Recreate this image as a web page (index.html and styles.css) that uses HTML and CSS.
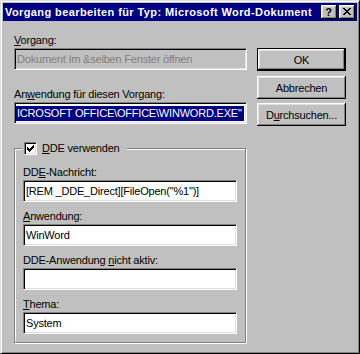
FILE: index.html
```html
<!DOCTYPE html>
<html lang="de">
<head>
<meta charset="utf-8">
<title>Vorgang bearbeiten</title>
<link rel="stylesheet" href="styles.css">
</head>
<body>
<div class="window">
  <div class="titlebar">
    <span class="title">Vorgang bearbeiten für Typ: Microsoft Word-Dokument</span>
    <div class="tbtns">
      <button class="tbtn help">?</button>
      <button class="tbtn close"><svg width="8" height="7" viewBox="0 0 8 7"><path d="M0 0h2v1h-2zM6 0h2v1h-2zM1 1h2v1h-2zM5 1h2v1h-2zM2 2h4v1h-4zM3 3h2v1h-2zM2 4h4v1h-4zM1 5h2v1h-2zM5 5h2v1h-2zM0 6h2v1h-2zM6 6h2v1h-2z" fill="#000"/></svg></button>
    </div>
  </div>
  <div class="content">
    <div class="left">
      <div class="lbl"><u>V</u>organg:</div>
      <div class="edit disabled"><span class="txt">Dokument Im &amp;selben Fenster öffnen</span></div>
      <div class="lbl lbl-gap">An<u>w</u>endung für diesen Vorgang:</div>
      <div class="edit"><span class="sel">ICROSOFT OFFICE\OFFICE\WINWORD.EXE"</span></div>
      <div class="group">
        <div class="legend">
          <span class="check"><svg width="7" height="7" viewBox="0 0 7 7"><path d="M0 2h1v3h-1zM1 3h1v3h-1zM2 4h1v3h-1zM3 3h1v3h-1zM4 2h1v3h-1zM5 1h1v3h-1zM6 0h1v3h-1z" fill="#000"/></svg></span>
          <span class="legend-text"><u>D</u>DE verwenden</span>
        </div>
        <div class="row first">
          <div class="lbl">DD<u>E</u>-Nachricht:</div>
          <div class="edit"><span class="txt">[REM _DDE_Direct][FileOpen("%1")]</span></div>
        </div>
        <div class="row">
          <div class="lbl"><u>A</u>nwendung:</div>
          <div class="edit"><span class="txt">WinWord</span></div>
        </div>
        <div class="row">
          <div class="lbl">DDE-Anwendung <u>n</u>icht aktiv:</div>
          <div class="edit"><span class="txt"></span></div>
        </div>
        <div class="row">
          <div class="lbl"><u>T</u>hema:</div>
          <div class="edit"><span class="txt">System</span></div>
        </div>
      </div>
    </div>
    <div class="right">
      <button class="btn default">OK</button>
      <button class="btn b2">Abbrechen</button>
      <button class="btn">D<u>u</u>rchsuchen...</button>
    </div>
  </div>
</div>
</body>
</html>
```
FILE: styles.css
```css
html, body {
  margin: 0;
  padding: 0;
}
body {
  width: 360px;
  height: 354px;
  overflow: hidden;
  background: #c0c0c0;
  font-family: "Liberation Sans", Arial, sans-serif;
  font-size: 11px;
  letter-spacing: -0.2px;
  color: #000;
}
u {
  text-decoration: underline;
  text-underline-offset: 1px;
}
.window {
  box-sizing: border-box;
  width: 360px;
  height: 354px;
  border: 1px solid;
  border-color: #dfdfdf #000 #000 #dfdfdf;
  box-shadow: inset 1px 1px 0 #fff, inset -1px -1px 0 #808080;
  padding: 2px;
  background: #c0c0c0;
  display: flex;
  flex-direction: column;
}
.titlebar {
  height: 18px;
  background: #000080;
  color: #fff;
  display: flex;
  align-items: center;
  padding: 0 2px 0 2px;
}
.title {
  font-weight: bold;
  letter-spacing: 0.4px;
  white-space: nowrap;
}
.tbtns {
  margin-left: auto;
  display: flex;
  gap: 2px;
}
.tbtn {
  box-sizing: border-box;
  width: 16px;
  height: 14px;
  padding: 0;
  border: none;
  background: #c0c0c0;
  box-shadow: inset -1px -1px 0 #000, inset 1px 1px 0 #fff, inset -2px -2px 0 #808080, inset 2px 2px 0 #dfdfdf;
  display: flex;
  align-items: center;
  justify-content: center;
  font-family: "Liberation Sans", Arial, sans-serif;
  font-size: 11px;
  font-weight: bold;
  color: #000;
  line-height: 12px;
}
.tbtn.help {
  padding: 0 1px 1px 0;
}
.tbtn.close svg {
  display: block;
  margin: 0 1px 1px 0;
}
.content {
  display: flex;
  padding: 13px 0 0 11px;
}
.left {
  width: 233px;
  display: flex;
  flex-direction: column;
}
.lbl {
  line-height: 13px;
  height: 13px;
  margin-bottom: 1px;
  white-space: nowrap;
}
.lbl-gap {
  margin-top: 18px;
}
.edit {
  box-sizing: border-box;
  height: 22px;
  border: 1px solid;
  border-color: #808080 #fff #fff #808080;
  box-shadow: inset 1px 1px 0 #000, inset -1px -1px 0 #dfdfdf;
  background: #fff;
  padding: 0 1px 0 1px;
  display: flex;
  align-items: center;
  overflow: hidden;
  white-space: nowrap;
}
.edit .txt {
  padding-left: 1px;
  line-height: 13px;
}
.edit.disabled {
  background: #c0c0c0;
  color: #808080;
}
.sel {
  background: #000080;
  color: #fff;
  line-height: 15px;
  padding: 0 2px 0 1px;
}
.group {
  margin-top: 24px;
  width: 232px;
  box-sizing: border-box;
  border: 1px solid #808080;
  box-shadow: inset 1px 1px 0 #fff, 1px 1px 0 #fff;
  padding: 0 8px 8px 8px;
}
.legend {
  display: flex;
  align-items: center;
  width: max-content;
  height: 14px;
  margin: -8px 0 0 -1px;
  padding: 0 7px 0 2px;
  background: #c0c0c0;
}
.check {
  box-sizing: border-box;
  width: 13px;
  height: 13px;
  border: 1px solid;
  border-color: #808080 #fff #fff #808080;
  box-shadow: inset 1px 1px 0 #000, inset -1px -1px 0 #dfdfdf;
  background: #fff;
  display: flex;
  align-items: center;
  justify-content: center;
}
.check svg {
  display: block;
}
.legend-text {
  margin-left: 5px;
  line-height: 13px;
}
.row {
  margin-top: 8px;
  display: flex;
  flex-direction: column;
  width: 214px;
}
.row.first {
  margin-top: 11px;
}
.right {
  margin-left: 10px;
  padding-top: 14px;
  display: flex;
  flex-direction: column;
}
.btn {
  box-sizing: border-box;
  width: 89px;
  height: 23px;
  padding: 0;
  border: none;
  background: #c0c0c0;
  box-shadow: inset -1px -1px 0 #000, inset 1px 1px 0 #fff, inset -2px -2px 0 #808080, inset 2px 2px 0 #dfdfdf;
  font-family: "Liberation Sans", Arial, sans-serif;
  font-size: 11px;
  letter-spacing: -0.2px;
  color: #000;
  margin-bottom: 4px;
}
.btn.default {
  border: 1px solid #000;
  margin-bottom: 5px;
}
.btn.b2 {
  margin-bottom: 4px;
}
```
